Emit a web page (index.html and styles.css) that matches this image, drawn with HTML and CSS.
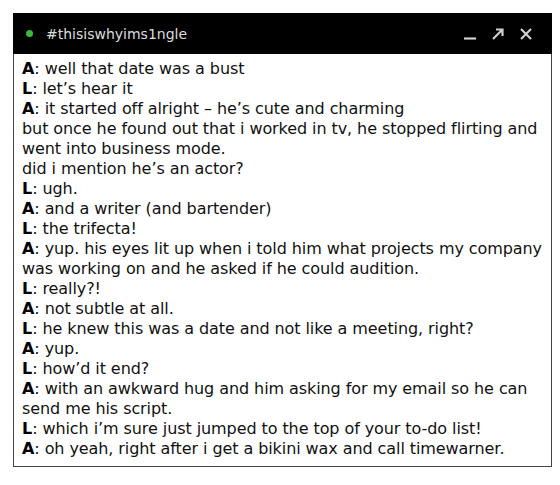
FILE: index.html
```html
<!DOCTYPE html>
<html>
<head>
<meta charset="utf-8">
<link rel="stylesheet" href="styles.css">
</head>
<body>
<div class="window">
  <div class="titlebar">
    <div class="title"><span class="dot"></span><span class="name">#thisiswhyims1ngle</span></div>
    <div class="controls">
      <svg class="ic" width="14" height="14" viewBox="0 0 14 14"><path d="M1 11.5H13" stroke="#cfcfcf" stroke-width="2.2"/></svg>
      <svg class="ic" width="14" height="14" viewBox="0 0 14 14"><path d="M2 12L11 3M5 2.5H11.5V9" stroke="#cfcfcf" stroke-width="2.2" fill="none"/></svg>
      <svg class="ic" width="14" height="14" viewBox="0 0 14 14"><path d="M2 2L12 12M12 2L2 12" stroke="#cfcfcf" stroke-width="2.2"/></svg>
    </div>
  </div>
  <div class="chat">
    <p><b>A</b>: well that date was a bust</p>
    <p><b>L</b>: let’s hear it</p>
    <p><b>A</b>: it started off alright – he’s cute and charming<br>but once he found out that i worked in tv, he stopped flirting and went into business mode.<br>did i mention he’s an actor?</p>
    <p><b>L</b>: ugh.</p>
    <p><b>A</b>: and a writer (and bartender)</p>
    <p><b>L</b>: the trifecta!</p>
    <p><b>A</b>: yup. his eyes lit up when i told him what projects my company was working on and he asked if he could audition.</p>
    <p><b>L</b>: really?!</p>
    <p><b>A</b>: not subtle at all.</p>
    <p><b>L</b>: he knew this was a date and not like a meeting, right?</p>
    <p><b>A</b>: yup.</p>
    <p><b>L</b>: how’d it end?</p>
    <p><b>A</b>: with an awkward hug and him asking for my email so he can send me his script.</p>
    <p><b>L</b>: which i’m sure just jumped to the top of your to-do list!</p>
    <p><b>A</b>: oh yeah, right after i get a bikini wax and call timewarner.</p>
  </div>
</div>
</body>
</html>
```
FILE: styles.css
```css
html, body { margin: 0; padding: 0; background: #fff; }
body { padding: 13px 8px 0 13px; font-family: "DejaVu Sans", sans-serif; }
.window { width: 539px; }
.titlebar {
  height: 41px;
  background: #000;
  display: flex;
  align-items: center;
  justify-content: space-between;
  padding: 0 19px 0 13px;
  box-sizing: border-box;
}
.title { display: flex; align-items: center; gap: 13px; }
.dot { width: 7px; height: 7px; border-radius: 50%; background: #3cb83c; }
.name { color: #dcdcdc; font-size: 14px; }
.controls { display: flex; gap: 14px; align-items: center; }
.ic { display: block; }
.chat {
  border: 1px solid #444;
  border-top: none;
  padding: 5px 3px 7px 8px;
  color: #111;
  font-size: 16px;
  letter-spacing: -0.08px;
  line-height: 20px;
}
.chat p { margin: 0; }
.chat b { font-weight: bold; color: #000; }
```
